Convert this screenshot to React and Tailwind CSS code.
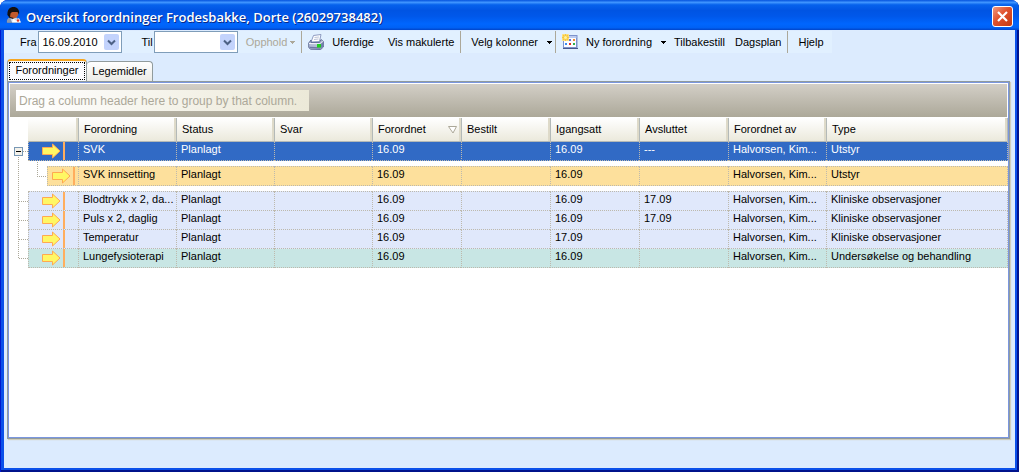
import React from "react";

const COLUMNS = [
  { label: "Forordning", width: "w-[98px]" },
  { label: "Status", width: "w-[98px]" },
  { label: "Svar", width: "w-[98px]" },
  { label: "Forordnet", width: "w-[89px]", sorted: true },
  { label: "Bestilt", width: "w-[89px]" },
  { label: "Igangsatt", width: "w-[89px]" },
  { label: "Avsluttet", width: "w-[89px]" },
  { label: "Forordnet av", width: "w-[98px]" },
  { label: "Type", width: "" },
];

const BLUE = "bg-[#e0e8fb]";

const ROWS = [
  { tone: "bg-[#316ac5] text-white", cells: ["SVK", "Planlagt", "", "16.09", "", "16.09", "---", "Halvorsen, Kim...", "Utstyr"] },
  { gap: true },
  { tone: "bg-[#fde09c]", child: true, top: true, cells: ["SVK innsetting", "Planlagt", "", "16.09", "", "16.09", "", "Halvorsen, Kim...", "Utstyr"] },
  { gap: true },
  { tone: BLUE, top: true, cells: ["Blodtrykk x 2, da...", "Planlagt", "", "16.09", "", "16.09", "17.09", "Halvorsen, Kim...", "Kliniske observasjoner"] },
  { tone: BLUE, cells: ["Puls x 2, daglig", "Planlagt", "", "16.09", "", "16.09", "17.09", "Halvorsen, Kim...", "Kliniske observasjoner"] },
  { tone: BLUE, cells: ["Temperatur", "Planlagt", "", "16.09", "", "17.09", "", "Halvorsen, Kim...", "Kliniske observasjoner"] },
  { tone: "bg-[#c8e6e4]", cells: ["Lungefysioterapi", "Planlagt", "", "16.09", "", "16.09", "", "Halvorsen, Kim...", "Undersøkelse og behandling"] },
];

function PersonIcon() {
  return (
    <svg width="16" height="16" viewBox="0 0 16 16" aria-hidden="true">
      <path d="M1 15.500c0-3.500 2-5.500 6-5.500s7 2 7 5.500z" fill="#c9d9ee" stroke="#5a6c92" strokeWidth=".6" />
      <path d="M1 15.500c0-3 1-4.500 3-5l2 5z" fill="#8a98b0" />
      <ellipse cx="7.500" cy="6.500" rx="4.800" ry="5" fill="#c25a2c" />
      <path d="M1.500 8C1 2.500 4 0 7.500 0S14 2.500 13 7.500L11.500 5C9 5.500 6 4 4.500 6.500L4 10z" fill="#15100f" />
      <path d="M2 7.500L4 10.500l3.500 1" stroke="#15100f" strokeWidth="1.200" fill="none" />
      <path d="M7 11.500l3 2 3-2.500 2 4.500H6z" fill="#fff" />
      <circle cx="12" cy="13.500" r="1.300" fill="#dc3b2a" />
    </svg>
  );
}

function PrinterIcon() {
  return (
    <svg width="16" height="16" viewBox="0 0 16 16" aria-hidden="true">
      <path d="M5.500 1.500L13 .5l-1.500 7L3 8z" fill="#fff" stroke="#8290ba" strokeWidth=".9" />
      <path d="M6.500 3.500l4.500-.5M6 5.500l4.500-.5" stroke="#a9b4cf" strokeWidth=".8" />
      <path d="M3 6L.7 9v4.500l2 1.800 10 .2 2.700-2.500V7.500L13 5.500l-1.500 3H3z" fill="#b4bcd6" stroke="#5c6a93" strokeWidth=".9" />
      <path d="M1 9.500l11.500.3L15 7.500" fill="none" stroke="#f5f7fc" />
      <path d="M1.500 13.500l11 .5" stroke="#6c78a2" strokeWidth="1.400" />
      <path d="M12.500 10l2.500-2v4.500l-2.500 2.500z" fill="#7380ac" />
      <rect x="9" y="10" width="4" height="3.500" fill="#1ed01e" />
    </svg>
  );
}

function CalendarIcon() {
  return (
    <svg width="16" height="16" viewBox="0 0 16 16" aria-hidden="true">
      <rect x="1" y="1" width="14.500" height="13.500" fill="#7c92cc" />
      <rect x="2" y="2" width="12.500" height="2" fill="#bccbf0" />
      <rect x="2" y="4" width="12" height="9" fill="#fdfdff" />
      <path d="M1 14.500h15" stroke="#48598c" />
      <rect x="7" y="5" width="2" height="2" fill="#5b78e0" />
      <rect x="11" y="5" width="2" height="2" fill="#f08a34" />
      <rect x="3" y="9" width="2" height="2" fill="#3b8df2" />
      <rect x="7" y="9" width="2" height="2" fill="#e3311f" />
      <rect x="11" y="9" width="2" height="2" fill="#2fb04a" />
      <rect x="0" y="0" width="7" height="7" fill="#fbe596" />
      <path d="M3.500 0v7M0 3.500h7M1 1l5 5M6 1L1 6" stroke="#f7c83c" strokeWidth="1.300" />
      <circle cx="3.500" cy="3.500" r="1.500" fill="#fff3a0" />
    </svg>
  );
}

function Caret() {
  return (
    <svg width="6" height="3" viewBox="0 0 6 3" shapeRendering="crispEdges" aria-hidden="true">
      <path d="M0 0h6L3 3z" fill="currentColor" />
    </svg>
  );
}

function ArrowIcon() {
  return (
    <svg width="19" height="16" viewBox="0 0 19 16" className="shrink-0" aria-hidden="true">
      <path d="M.5 4.500h10v-3.500l7.500 7-7.500 7v-3.500H.5z" fill="#fff764" stroke="#ffa851" />
    </svg>
  );
}

function DateSelect({ id, label, value }) {
  return (
    <div className="flex items-center gap-px">
      <label htmlFor={id}>{label}</label>
      <div className="grid w-21 items-center">
        <select
          id={id}
          defaultValue={value}
          className="col-start-1 row-start-1 h-[22px] w-full appearance-none border border-[#7f9db9] bg-white pl-1"
        >
          <option value={value}>{value}</option>
        </select>
        <span className="pointer-events-none col-start-1 row-start-1 mr-[3px] flex h-4 w-[15px] items-center justify-center justify-self-end rounded-xs bg-[#c3d3fc]">
          <svg width="9" height="7" viewBox="0 0 9 7" aria-hidden="true">
            <path d="M1 1.500l3.500 3.500L8 1.500" fill="none" stroke="#4d6185" strokeWidth="2" />
          </svg>
        </span>
      </div>
    </div>
  );
}

function Separator() {
  return <span className="h-[22px] w-px bg-[#aca899]" />;
}

function TreeLines() {
  return (
    <svg width="19" height="126" viewBox="0 0 19 126" shapeRendering="crispEdges" className="block" aria-hidden="true">
      <g stroke="#aca899" strokeDasharray="1 1" fill="none">
        <path d="M9.500 15v101M14 9.500h5M10 59.500h9M10 78.500h9M10 97.500h9M10 116.500h9" />
      </g>
      <rect x="5.500" y="5.500" width="8" height="8" rx="1" fill="#f3f1ea" stroke="#7898b5" />
      <path d="M7 9.500h5" stroke="#000" />
    </svg>
  );
}

function IconCell() {
  return (
    <div className="flex h-[18px] items-center">
      <ArrowIcon />
      <span className="ml-[2px] h-full w-[2px] bg-[#ffae5e]" />
    </div>
  );
}

function Row({ row, first }) {
  if (row.gap) {
    return (
      <tr>
        <td colSpan={10} className="h-[5px] p-0" />
      </tr>
    );
  }

  const line = row.top ? "border-y" : "border-b";
  return (
    <tr>
      {first && (
        <td rowSpan={ROWS.length} className="p-0 align-top">
          <TreeLines />
        </td>
      )}
      <td className="p-0">
        {row.child ? (
          <div className="flex">
            <svg width="19" height="20" viewBox="0 0 19 20" shapeRendering="crispEdges" className="shrink-0 overflow-visible" aria-hidden="true">
              <path d="M9.500-4v14.500H19" fill="none" stroke="#aca899" strokeDasharray="1 1" />
            </svg>
            <div className={`flex-1 border-l border-dotted border-[#bdb9ad] pl-1 ${line} ${row.tone}`}>
              <IconCell />
            </div>
          </div>
        ) : (
          <div className={`border-l border-dotted border-[#bdb9ad] pl-[13px] ${line} ${row.tone}`}>
            <IconCell />
          </div>
        )}
      </td>
      {row.cells.map((text, i) => (
        <td
          key={i}
          className={`overflow-hidden border-l border-dotted border-[#bdb9ad] p-0 pl-1 align-top whitespace-nowrap last:border-r ${line} ${row.tone}`}
        >
          <div className="h-[18px] leading-[14px]">{text}</div>
        </td>
      ))}
    </tr>
  );
}

export default function App() {
  return (
    <div className="flex min-h-screen flex-col rounded-t-lg bg-[#0b50ea] font-['Liberation_Sans',Arial,sans-serif] text-[11px] text-black shadow-[inset_1px_0_#0019cf,inset_-2px_-2px_#00138c]">
      <header className="flex h-[30px] items-center rounded-t-lg bg-[linear-gradient(#0453dd_0%,#3f95ff_8%,#0662ec_16%,#0054e3_35%,#0058ea_55%,#0066fe_80%,#0061f5_92%,#0144c8_100%)] px-[6px]">
        <PersonIcon />
        <h1 className="ml-1 flex-1 pt-1 font-['Open_Sans',sans-serif] text-[13px] leading-4 font-semibold whitespace-nowrap text-white [text-shadow:1px_1px_#0a2a86]">
          Oversikt forordninger Frodesbakke, Dorte (26029738482)
        </h1>
        <button type="button" aria-label="Lukk" className="mt-[2px] flex h-[21px] w-[21px] items-center justify-center rounded-[3px] border border-white bg-[linear-gradient(135deg,#f0997f,#e0512c_45%,#c33a12)]">
          <svg width="13" height="13" viewBox="0 0 13 13" aria-hidden="true">
            <path d="M2 2l9 9M11 2l-9 9" stroke="#fff" strokeWidth="2.200" />
          </svg>
        </button>
      </header>

      <div className="mx-1 mb-1 flex flex-1 flex-col bg-[#dcebfe]">
        <nav className="mt-px flex h-[22px] items-center self-start bg-[#e1f0ff] pr-2 pl-4 whitespace-nowrap">
          <DateSelect id="fra" label="Fra" value="16.09.2010" />
          <div className="ml-5">
            <DateSelect id="til" label="Til" value="" />
          </div>
          <button type="button" disabled className="mr-[6px] ml-2 flex items-center gap-[2px] text-[#aca899]">
            Opphold <Caret />
          </button>
          <Separator />
          <button type="button" className="mx-[6px] flex items-center gap-2">
            <PrinterIcon /> Uferdige
          </button>
          <button type="button" className="mr-[6px] ml-2">Vis makulerte</button>
          <Separator />
          <button type="button" className="mr-[3px] ml-[10px] flex items-center gap-2">
            Velg kolonner <Caret />
          </button>
          <Separator />
          <button type="button" className="ml-[6px] flex items-center gap-2">
            <CalendarIcon /> Ny forordning <Caret />
          </button>
          <button type="button" className="ml-2">Tilbakestill</button>
          <button type="button" className="mr-[6px] ml-[10px]">Dagsplan</button>
          <Separator />
          <button type="button" className="ml-[10px]">Hjelp</button>
        </nav>

        <main className="flex flex-1 flex-col pt-[6px] pr-[5px] pb-[29px] pl-[3px]">
          <div role="tablist" className="flex items-end">
            <button type="button" role="tab" aria-selected="true" className="h-[22px] w-20 rounded-t-sm border-x border-t-2 border-x-[#919b9c] border-t-[#f5a623] bg-[#fbfbfe] p-px">
              <span className="block h-[18px] border border-dotted border-black leading-[14px]">Forordninger</span>
            </button>
            <button type="button" role="tab" aria-selected="false" className="h-5 w-[66px] rounded-t-sm border border-b-0 border-l-0 border-[#919b9c] bg-linear-to-b from-white to-[#ecebe6]">
              Legemidler
            </button>
          </div>

          <section className="flex flex-1 flex-col border border-[#919b9c] shadow-[1px_1px_1px_#d0cdbb]">
            <div className="flex flex-1 flex-col border border-[#7a96df] bg-white pt-px">
              <div className="mx-px flex h-[33px] items-center bg-linear-to-b from-[#d3cfc7] to-[#aca899] pl-[6px]">
                <p className="h-[21px] bg-linear-to-r from-white to-[#ece9d8] pr-3 pl-[3px] text-[12px] leading-[22px] text-[#aca899]">
                  Drag a column header here to group by that column.
                </p>
              </div>
              <table className="mt-px w-full table-fixed border-separate border-spacing-0 text-left">
                <thead>
                  <tr>
                    <th className="w-[19px] p-0" aria-label="Tre" />
                    <th aria-label="Handling" className="w-[50px] border-b border-[#b3b5ac] bg-linear-to-b from-white to-[#ebe9dc] p-0 shadow-[inset_-2px_0_#dedac9]" />
                    {COLUMNS.map((c) => (
                      <th
                        key={c.label}
                        className={`h-6 border-b border-l border-[#b3b9b8] bg-linear-to-b from-white to-[#ebe9dc] p-0 pl-[5px] font-normal whitespace-nowrap shadow-[inset_-2px_0_#dedac9] last:border-r ${c.width}`}
                      >
                        <div className="flex items-center justify-between pr-1">
                          {c.label}
                          {c.sorted && (
                            <svg width="9" height="8" viewBox="0 0 9 8" aria-hidden="true">
                              <path d="M.5.5h8L5 7z" fill="#fff" stroke="#aca899" />
                            </svg>
                          )}
                        </div>
                      </th>
                    ))}
                  </tr>
                </thead>
                <tbody>
                  {ROWS.map((row, i) => (
                    <Row key={i} row={row} first={i === 0} />
                  ))}
                </tbody>
              </table>
            </div>
          </section>
        </main>
      </div>
    </div>
  );
}
